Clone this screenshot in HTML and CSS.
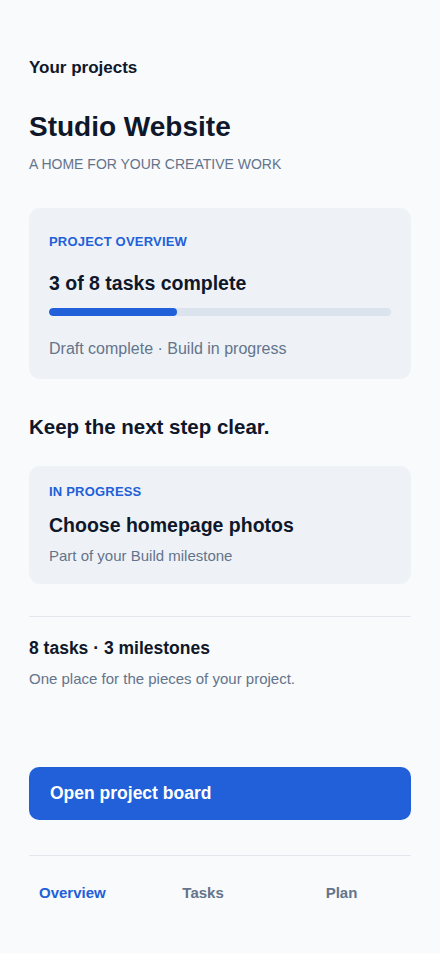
FILE: index.html
```html
<!DOCTYPE html>
<html lang="en">
<head>
    <meta charset="UTF-8">
    <meta name="viewport" content="width=device-width, initial-scale=1.0">
    <title>Studio Website</title>
    <link rel="stylesheet" href="styles.css">
</head>
<body>
<div class="page">
    <div class="eyebrow">Your projects</div>
    <h1 class="project-title">Studio Website</h1>
    <div class="project-tagline">A home for your creative work</div>

    <div class="card overview-card">
        <div class="card-label">Project overview</div>
        <div class="card-title">3 of 8 tasks complete</div>
        <div class="progress-track">
            <div class="progress-fill" style="width: 37.5%"></div>
        </div>
        <div class="card-note">Draft complete · Build in progress</div>
    </div>

    <h2 class="section-heading">Keep the next step clear.</h2>

    <div class="card step-card">
        <div class="card-label">In progress</div>
        <div class="card-title">Choose homepage photos</div>
        <div class="card-sub">Part of your Build milestone</div>
    </div>

    <div class="summary">
        <div class="summary-count">8 tasks · 3 milestones</div>
        <div class="summary-text">One place for the pieces of your project.</div>
    </div>

    <button class="board-button">Open project board</button>

    <!-- bottom tabs -->
    <nav class="tab-bar">
        <a href="#" class="tab active">Overview</a>
        <a href="#" class="tab">Tasks</a>
        <a href="#" class="tab">Plan</a>
    </nav>
</div>
</body>
</html>
```

FILE: styles.css
```css
body {
    margin: 0;
    font-family: "Liberation Sans", Arial, Helvetica, sans-serif;
    background-color: #f8fafc;
    color: #0f172a;
}
.page {
    padding: 57px 29px 0;
}
.eyebrow {
    font-size: 17px;
    line-height: 22px;
    font-weight: bold;
}
.project-title {
    margin: 31px 0 0;
    font-size: 28px;
    line-height: 34px;
    font-weight: bold;
}
.project-tagline {
    margin-top: 11px;
    font-size: 14px;
    line-height: 18px;
    text-transform: uppercase;
    color: #64748b;
}
.card {
    background-color: #eef2f7;
    border-radius: 11px;
}
.overview-card {
    margin-top: 35px;
    padding: 24px 20px 20px;
}
.step-card {
    margin-top: 26px;
    padding: 18px 20px 18px;
}
.card-label {
    font-size: 13px;
    line-height: 16px;
    font-weight: bold;
    letter-spacing: 0.2px;
    text-transform: uppercase;
    color: #2160d8;
}
.overview-card .card-label {
    line-height: 20px;
}
.card-title {
    font-size: 19.5px;
    line-height: 24px;
    font-weight: bold;
}
.overview-card .card-title {
    margin-top: 19px;
}
.step-card .card-title {
    margin-top: 13px;
}
.progress-track {
    margin-top: 13px;
    height: 8px;
    border-radius: 4px;
    background-color: #dbe3ee;
    overflow: hidden;
}
.progress-fill {
    height: 100%;
    border-radius: 4px;
    background-color: #2160d8;
}
.card-note {
    margin-top: 23px;
    font-size: 16px;
    line-height: 20px;
    color: #64748b;
}
.card-sub {
    margin-top: 9px;
    font-size: 15px;
    line-height: 20px;
    color: #64748b;
}
.section-heading {
    margin: 35px 0 0;
    font-size: 20.5px;
    line-height: 26px;
    font-weight: bold;
}
.summary {
    margin-top: 32px;
    padding-top: 20px;
    border-top: 1px solid #e3e8ef;
}
.summary-count {
    font-size: 17.5px;
    line-height: 22px;
    font-weight: bold;
}
.summary-text {
    margin-top: 10px;
    font-size: 15px;
    line-height: 20px;
    color: #64748b;
}
.board-button {
    display: block;
    width: 100%;
    margin-top: 78px;
    padding: 16px 21px 16px;
    font-family: inherit;
    font-size: 17.5px;
    line-height: 21px;
    font-weight: bold;
    text-align: left;
    color: #ffffff;
    background-color: #2160d8;
    border: none;
    border-radius: 10px;
    cursor: pointer;
}
.tab-bar {
    display: grid;
    grid-template-columns: repeat(3, 1fr);
    column-gap: 48px;
    margin-top: 35px;
    padding-top: 24px;
    border-top: 1px solid #e3e8ef;
}
.tab {
    padding: 4px 10px;
    font-size: 15px;
    line-height: 18px;
    font-weight: bold;
    color: #64748b;
    text-decoration: none;
}
.tab.active {
    color: #2160d8;
}
```
